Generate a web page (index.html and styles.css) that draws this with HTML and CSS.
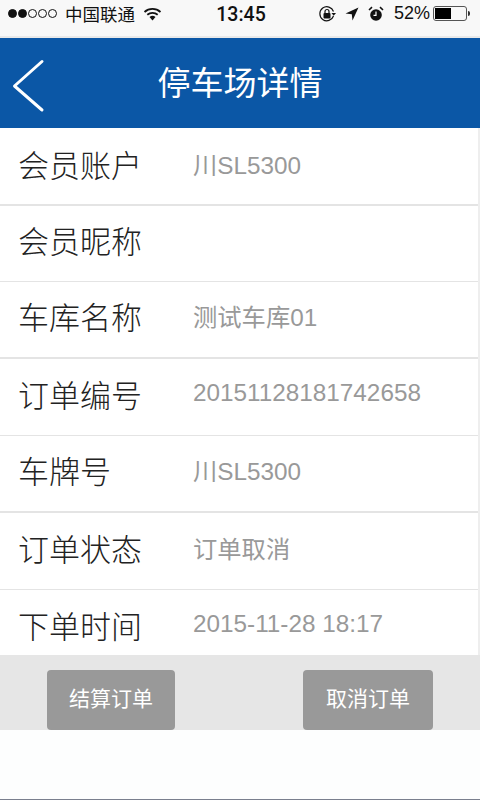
FILE: index.html
```html
<!DOCTYPE html>
<html lang="zh-CN">
<head>
    <meta charset="UTF-8">
    <meta name="viewport" content="width=device-width, initial-scale=1.0">
    <title>停车场详情</title>
    <link rel="stylesheet" href="styles.css">
</head>
<body>
    <div class="status-bar">
        <div class="status-left">
            <span class="signal">
                <i class="on"></i><i class="on"></i><i></i><i></i><i></i>
            </span>
            <span>中国联通</span>
            <svg class="wifi" width="19" height="14" viewBox="0 0 18 14">
                <path d="M1 5 A12 12 0 0 1 17 5" fill="none" stroke="#111" stroke-width="1.8"/>
                <path d="M3.8 7.8 A8 8 0 0 1 14.2 7.8" fill="none" stroke="#111" stroke-width="1.8"/>
                <path d="M9 13.5 L6 10 A4.6 4.6 0 0 1 12 10 Z" fill="#111"/>
            </svg>
        </div>
        <div class="status-time">13:45</div>
        <div class="status-right">
            <svg width="18" height="18" viewBox="0 0 18 18">
                <path d="M15.5 11 A7 7 0 1 1 15.5 6.5" fill="none" stroke="#111" stroke-width="1.2"/>
                <path d="M13.5 8 L18 8 L15.7 10.8 Z" fill="#111"/>
                <rect x="5.5" y="8" width="7" height="5.5" rx="1" fill="#111"/>
                <path d="M7 8 V6.5 A2 2 0 0 1 11 6.5 V8" fill="none" stroke="#111" stroke-width="1.2"/>
            </svg>
            <svg width="14" height="14" viewBox="0 0 14 14">
                <path d="M0.5 6.5 L13.5 0.5 L7.5 13.5 L6.8 7.2 Z" fill="#111"/>
            </svg>
            <svg class="alarm" width="16" height="16" viewBox="0 0 16 16">
                <circle cx="8" cy="9" r="5.8" fill="#111"/>
                <path d="M8 5.5 V9.3 H5.5" fill="none" stroke="#fff" stroke-width="1.2"/>
                <path d="M1 4 L4 1.2 M15 4 L12 1.2" stroke="#111" stroke-width="1.6"/>
            </svg>
            <span class="battery-text">52%</span>
            <span class="battery"><span class="battery-level"></span></span>
            <span class="battery-tip"></span>
        </div>
    </div>

    <div class="header">
        <svg class="back" width="34" height="58" viewBox="0 0 34 58">
            <path d="M31 4.5 L3.5 29 L31 53" fill="none" stroke="#fff" stroke-width="3" stroke-linecap="round" stroke-linejoin="round"/>
        </svg>
        <h1>停车场详情</h1>
    </div>

    <div class="list">
        <div class="row"><span class="label">会员账户</span><span class="value">川SL5300</span></div>
        <div class="row"><span class="label">会员昵称</span><span class="value"></span></div>
        <div class="row"><span class="label">车库名称</span><span class="value">测试车库01</span></div>
        <div class="row"><span class="label">订单编号</span><span class="value">20151128181742658</span></div>
        <div class="row"><span class="label">车牌号</span><span class="value">川SL5300</span></div>
        <div class="row"><span class="label">订单状态</span><span class="value">订单取消</span></div>
        <div class="row last"><span class="label">下单时间</span><span class="value">2015-11-28 18:17</span></div>
    </div>

    <div class="actions">
        <button class="btn btn-left">结算订单</button>
        <button class="btn btn-right">取消订单</button>
    </div>
    <div class="bottom-line"></div>
</body>
</html>
```
FILE: styles.css
```css
* {
    box-sizing: border-box;
    margin: 0;
    padding: 0;
}

body {
    background: #fdfefe;
    display: flex;
    flex-direction: column;
    font-family: "Liberation Sans", "Noto Sans CJK SC", sans-serif;
    height: 800px;
    overflow: hidden;
}

.status-bar {
    align-items: center;
    background: #f8f8f8;
    border-bottom: 2px solid #e9e9e9;
    color: #111;
    display: flex;
    height: 38px;
    justify-content: space-between;
    padding: 0 8px 9px 8px;
    position: relative;
}

.status-left {
    align-items: center;
    display: flex;
    font-family: "Noto Sans CJK SC", sans-serif;
    font-size: 17.5px;
}

.signal {
    display: flex;
    gap: 1px;
    margin-right: 8px;
}

.signal i {
    border: 1px solid #111;
    border-radius: 50%;
    display: block;
    height: 9px;
    width: 9px;
}

.signal i.on {
    background: #111;
}

.wifi {
    margin-left: 8px;
}

.status-time {
    font-family: Roboto, "Liberation Sans", sans-serif;
    font-size: 19.5px;
    font-weight: 500;
    left: 2px;
    position: absolute;
    right: 0;
    text-align: center;
    top: 3px;
}

.status-right {
    align-items: center;
    display: flex;
    gap: 9px;
}

.alarm {
    margin-right: 1px;
}

.battery-text {
    font-size: 18px;
}

.battery {
    border: 1px solid #555;
    border-radius: 3px;
    display: block;
    height: 15px;
    margin-left: -6px;
    padding: 1px;
    width: 34px;
}

.battery-level {
    background: #000;
    display: block;
    height: 100%;
    width: 52%;
}

.battery-tip {
    background: #333;
    border-radius: 0 2px 2px 0;
    display: block;
    height: 5px;
    margin-left: -8px;
    margin-right: 2px;
    width: 2px;
}

.header {
    align-items: center;
    background: #0b57a6;
    display: flex;
    height: 90px;
    justify-content: center;
    padding-bottom: 4px;
    position: relative;
}

.header h1 {
    color: #fff;
    font-family: "Noto Sans CJK SC", sans-serif;
    font-size: 33px;
    font-weight: 400;
}

.back {
    left: 11px;
    position: absolute;
    top: 19px;
}

.list {
    background: #fff;
    border-right: 2px solid #eeeeee;
}

.row {
    align-items: center;
    border-bottom: 2px solid #e4e4e4;
    display: flex;
    height: 77px;
    padding-bottom: 8px;
    padding-left: 18px;
}

.row:first-child {
    height: 78px;
    padding-bottom: 6px;
}

.row:nth-child(2) {
    height: 76px;
}

.row:nth-child(even) {
    border-bottom-width: 1px;
}

.row.last {
    border-bottom: 0;
    height: 65px;
    padding-bottom: 0;
    padding-top: 3px;
}

.label {
    color: #222;
    font-family: "Noto Sans CJK SC", sans-serif;
    font-size: 31px;
    font-weight: 300;
    width: 175px;
}

.value {
    color: #999;
    font-size: 24.3px;
}

.actions {
    background: #e6e6e6;
    display: flex;
    height: 75px;
    justify-content: space-between;
    padding: 15px 47px 0 47px;
}

.btn {
    background: #999;
    border: 0;
    border-radius: 4px;
    color: #fff;
    font-family: "Noto Sans CJK SC", sans-serif;
    font-size: 21px;
    height: 60px;
    padding-bottom: 6px;
}

.btn-left {
    width: 128px;
}

.btn-right {
    width: 130px;
}

.bottom-line {
    background: #7a7f8e;
    height: 1px;
    margin-top: auto;
}
```
